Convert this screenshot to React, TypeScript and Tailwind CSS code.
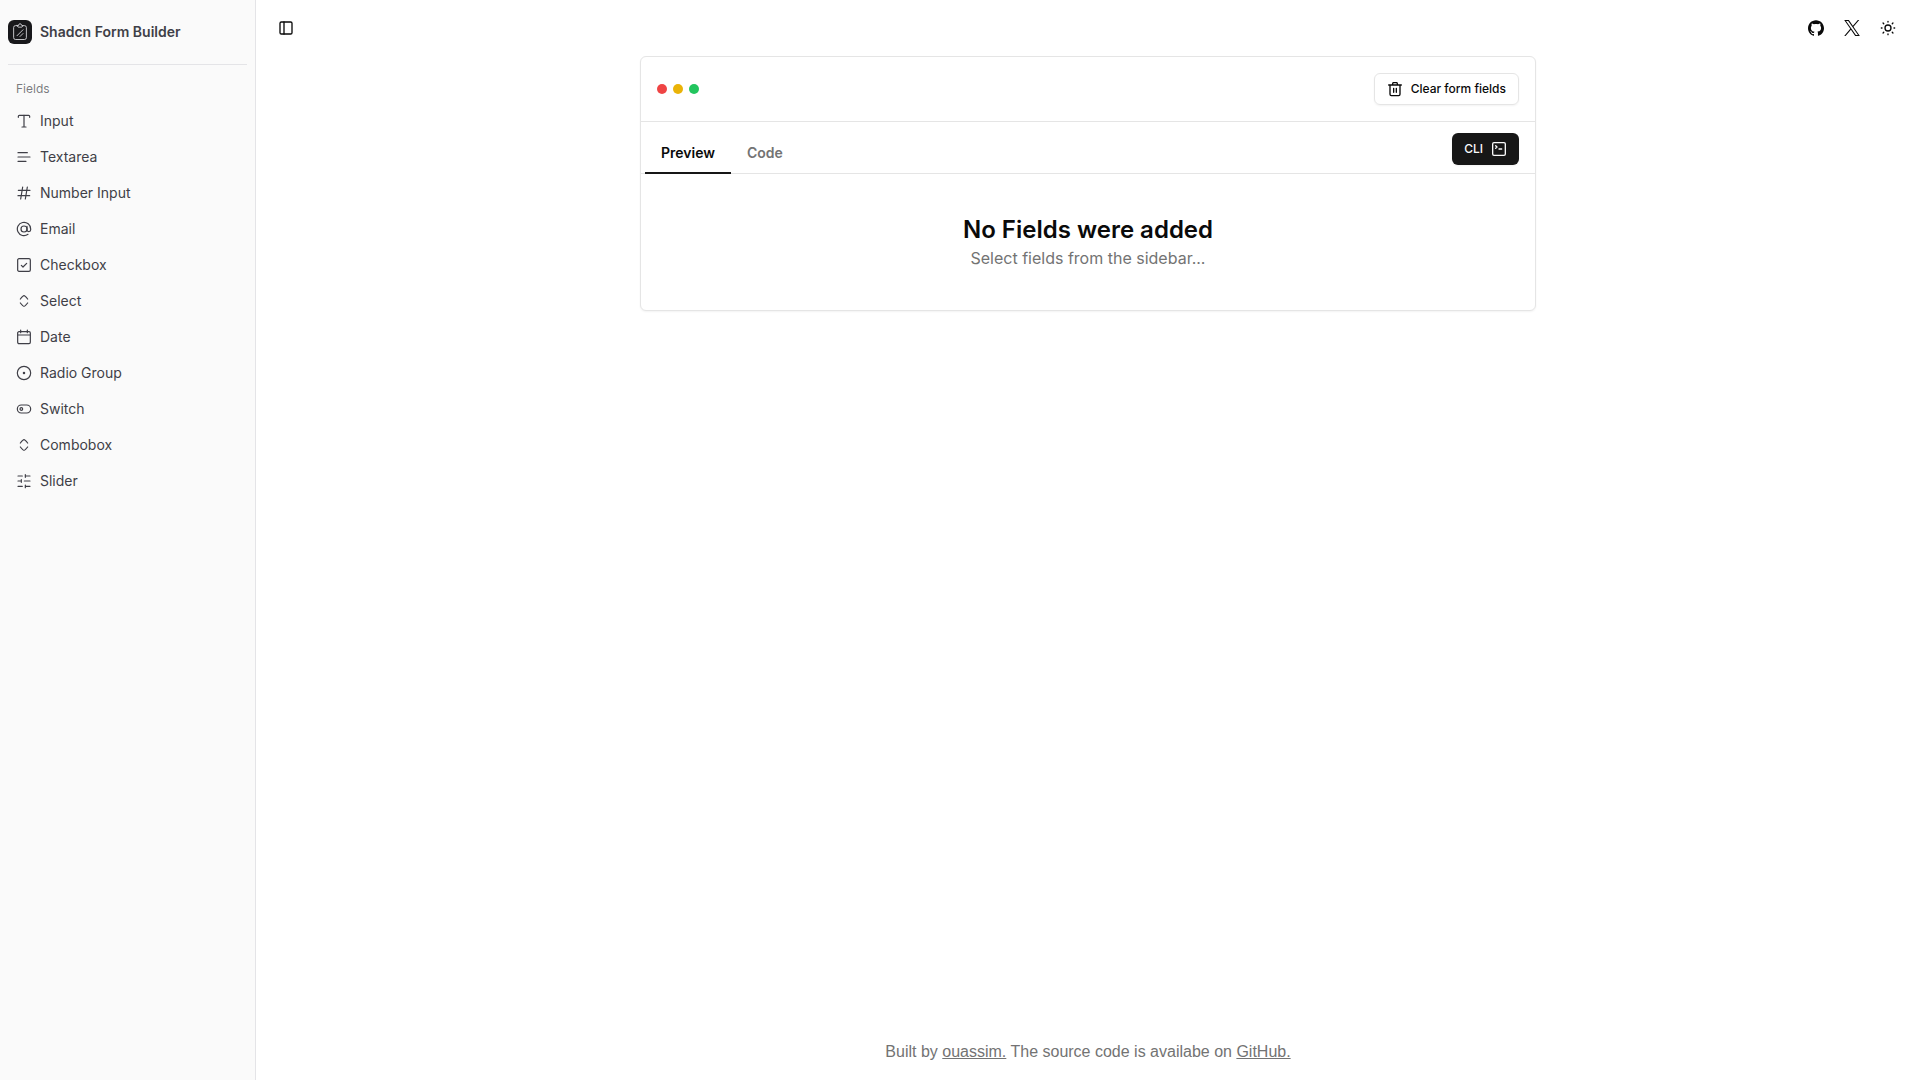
import type { ReactNode } from "react";

type IconProps = { children: ReactNode; className?: string; strokeWidth?: number };

function Icon({ children, className = "size-4", strokeWidth = 2 }: IconProps) {
  return (
    <svg
      className={`${className} shrink-0`}
      viewBox="0 0 24 24"
      fill="none"
      stroke="currentColor"
      strokeWidth={strokeWidth}
      strokeLinecap="round"
      strokeLinejoin="round"
      aria-hidden="true"
    >
      {children}
    </svg>
  );
}

const unfold = (
  <>
    <path d="M17.5 15s-4 5-5.5 5-5.5-5-5.5-5" />
    <path d="M17.5 9s-4-5-5.5-5-5.5 5-5.5 5" />
  </>
);

const fields: { name: string; icon: ReactNode }[] = [
  {
    name: "Input",
    icon: <path d="M12 3v18M15 21H9M3.5 6.5V5A1.5 1.5 0 0 1 5 3.5h14A1.5 1.5 0 0 1 20.5 5v1.5" />,
  },
  { name: "Textarea", icon: <path d="M3 5.5h14M3 12h18M3 18.5h12" /> },
  { name: "Number Input", icon: <path d="M10 3 7 21M17 3l-3 18M3.5 8H21M3 16h17.5" /> },
  {
    name: "Email",
    icon: (
      <>
        <circle cx="12" cy="12" r="4.5" />
        <path d="M16.5 8v5.2a2.7 2.7 0 0 0 5.5 0V12a10 10 0 1 0-4 8" />
      </>
    ),
  },
  {
    name: "Checkbox",
    icon: (
      <>
        <rect x="2.5" y="2.5" width="19" height="19" rx="2" />
        <path d="m8 12.5 2.5 2.5L16 9.5" />
      </>
    ),
  },
  { name: "Select", icon: unfold },
  {
    name: "Date",
    icon: (
      <>
        <path d="M17 1.5v4M7 1.5v4M3 9h18" />
        <rect x="2.5" y="4" width="19" height="18" rx="2" />
      </>
    ),
  },
  {
    name: "Radio Group",
    icon: (
      <>
        <circle cx="12" cy="12" r="10" />
        <circle cx="12" cy="12" r="1" fill="currentColor" />
      </>
    ),
  },
  {
    name: "Switch",
    icon: (
      <>
        <rect x="2" y="6" width="20" height="12" rx="6" />
        <circle cx="8" cy="12" r="2" />
      </>
    ),
  },
  { name: "Combobox", icon: unfold },
  {
    name: "Slider",
    icon: <path d="M3 4.5h6.5M14 4.5h7M14 2.5v4M3 12h5M8 10v4M12.5 12H21M3 20h6.5M14 20h7M14 18v4" />,
  },
];

function Sidebar() {
  return (
    <aside className="flex w-64 shrink-0 flex-col border-r border-zinc-200 bg-[#fafafa] text-zinc-700">
      <div className="flex h-16 items-center gap-2 px-2">
        <span className="flex size-6 items-center justify-center rounded-md bg-zinc-900 text-zinc-300">
          <Icon className="size-[18px]" strokeWidth={1.2}>
            <path d="M8 3.5H6A2.5 2.5 0 0 0 3.500 6v13.500A2.500 2.500 0 0 0 6 22h12a2.500 2.500 0 0 0 2.500-2.500V6A2.500 2.500 0 0 0 18 3.500h-2" />
            <path d="m8 3.5 1.500 2h5l1.500-2L14 3a2 2 0 0 0-4 0ZM8 17l8-8M12 18l4-4" />
          </Icon>
        </span>
        <span className="text-sm font-semibold">Shadcn Form Builder</span>
      </div>
      <div className="mx-2 h-px bg-zinc-200" />
      <div className="p-2">
        <h2 className="flex h-8 items-center px-2 text-xs text-zinc-700/70">Fields</h2>
        <ul className="flex flex-col gap-1">
          {fields.map((field) => (
            <li key={field.name}>
              <button type="button" className="flex h-8 w-full items-center gap-2 rounded-md px-2 text-sm">
                <Icon strokeWidth={1.8}>{field.icon}</Icon>
                <span>{field.name}</span>
              </button>
            </li>
          ))}
        </ul>
      </div>
    </aside>
  );
}

function TopBar() {
  return (
    <header className="flex h-14 items-center justify-between px-4">
      <button type="button" aria-label="Toggle Sidebar" className="flex size-7 items-center justify-center">
        <Icon>
          <rect x="3" y="3" width="18" height="18" rx="2" />
          <path d="M9 3v18" />
        </Icon>
      </button>
      <div className="flex items-center gap-1">
        <a href="#github" aria-label="GitHub" className="flex size-8 items-center justify-center">
          <svg className="size-4" viewBox="0 0 24 24" fill="currentColor" aria-hidden="true">
            <path d="M12 .297c-6.63 0-12 5.373-12 12 0 5.303 3.438 9.8 8.205 11.385.6.113.82-.258.82-.577 0-.285-.01-1.04-.015-2.04-3.338.724-4.042-1.61-4.042-1.61C4.422 18.07 3.633 17.7 3.633 17.7c-1.087-.744.084-.729.084-.729 1.205.084 1.838 1.236 1.838 1.236 1.07 1.835 2.809 1.305 3.495.998.108-.776.417-1.305.76-1.605-2.665-.3-5.466-1.332-5.466-5.93 0-1.31.465-2.38 1.235-3.22-.135-.303-.54-1.523.105-3.176 0 0 1.005-.322 3.3 1.23.96-.267 1.98-.399 3-.405 1.02.006 2.04.138 3 .405 2.28-1.552 3.285-1.23 3.285-1.23.645 1.653.24 2.873.12 3.176.765.84 1.23 1.91 1.23 3.22 0 4.61-2.805 5.625-5.475 5.92.42.36.81 1.096.81 2.22 0 1.606-.015 2.896-.015 3.286 0 .315.21.69.825.57C20.565 22.092 24 17.592 24 12.297c0-6.627-5.373-12-12-12" />
          </svg>
        </a>
        <a href="#x" aria-label="X" className="flex size-8 items-center justify-center">
          <svg className="size-4" viewBox="0 0 24 24" fill="currentColor" aria-hidden="true">
            <path d="M14.2 10.2 22.9 0h-2.1l-7.5 8.8L7.3 0H.3l9.1 13.3L.3 24h2.1l8-9.3 6.4 9.3h7ZM3.1 1.6h3.2l14.7 20.9h-3.2Z" />
          </svg>
        </a>
        <button type="button" aria-label="Toggle theme" className="flex size-8 items-center justify-center">
          <Icon>
            <circle cx="12" cy="12" r="4.5" />
            <path d="M12 2v1M12 21v1M2 12h1M21 12h1M4.6 4.6l1 1M18.4 18.4l1 1M4.6 19.4l1-1M18.4 5.6l1-1" />
          </Icon>
        </button>
      </div>
    </header>
  );
}

function FormCard() {
  return (
    <section className="mx-auto w-full max-w-4xl rounded-md border border-neutral-200 bg-white shadow-xs">
      <div className="flex items-center justify-between border-b border-neutral-200 p-4">
        <div className="flex gap-1.5">
          <span className="size-2.5 rounded-full bg-[#ef4444]" />
          <span className="size-2.5 rounded-full bg-[#eab308]" />
          <span className="size-2.5 rounded-full bg-[#22c55e]" />
        </div>
        <button
          type="button"
          className="flex h-8 items-center gap-2 rounded-md border border-neutral-200 px-3 text-xs font-medium shadow-xs"
        >
          <Icon>
            <path d="M4.5 6v14a2 2 0 0 0 2 2h11a2 2 0 0 0 2-2V6M2.5 6h19M8 6l1-3.5h6L16 6M10 11v6M14 11v6" />
          </Icon>
          Clear form fields
        </button>
      </div>
      <div className="flex h-13 items-end justify-between border-b border-neutral-200 pr-4 pl-1">
        <div role="tablist" className="-mb-px flex text-sm font-semibold">
          <button type="button" role="tab" aria-selected="true" className="h-10 border-b-2 border-neutral-900 px-4">
            Preview
          </button>
          <button
            type="button"
            role="tab"
            aria-selected="false"
            className="h-10 border-b-2 border-transparent px-4 text-neutral-500"
          >
            Code
          </button>
        </div>
        <button
          type="button"
          className="mb-2 flex h-8 items-center gap-2 rounded-md bg-neutral-900 px-3 text-xs font-medium text-neutral-50 shadow-xs"
        >
          CLI
          <Icon>
            <rect x="2.5" y="2.5" width="19" height="19" rx="2" />
            <path d="m7 7 2 2-2 2M12 12h4" />
          </Icon>
        </button>
      </div>
      <div className="py-10 text-center">
        <h1 className="text-2xl font-semibold">No Fields were added</h1>
        <p className="text-base text-neutral-500">Select fields from the sidebar...</p>
      </div>
    </section>
  );
}

export default function App() {
  return (
    <div className="flex min-h-screen bg-white font-['Inter',sans-serif] text-neutral-950">
      <Sidebar />
      <div className="flex min-w-0 flex-1 flex-col">
        <TopBar />
        <main className="flex-1">
          <FormCard />
        </main>
        <footer className="p-4 text-center font-['Liberation_Sans',sans-serif] text-base text-neutral-500">
          Built by{" "}
          <a href="#author" className="underline">
            ouassim.
          </a>{" "}
          The source code is availabe on{" "}
          <a href="#source" className="underline">
            GitHub.
          </a>
        </footer>
      </div>
    </div>
  );
}
